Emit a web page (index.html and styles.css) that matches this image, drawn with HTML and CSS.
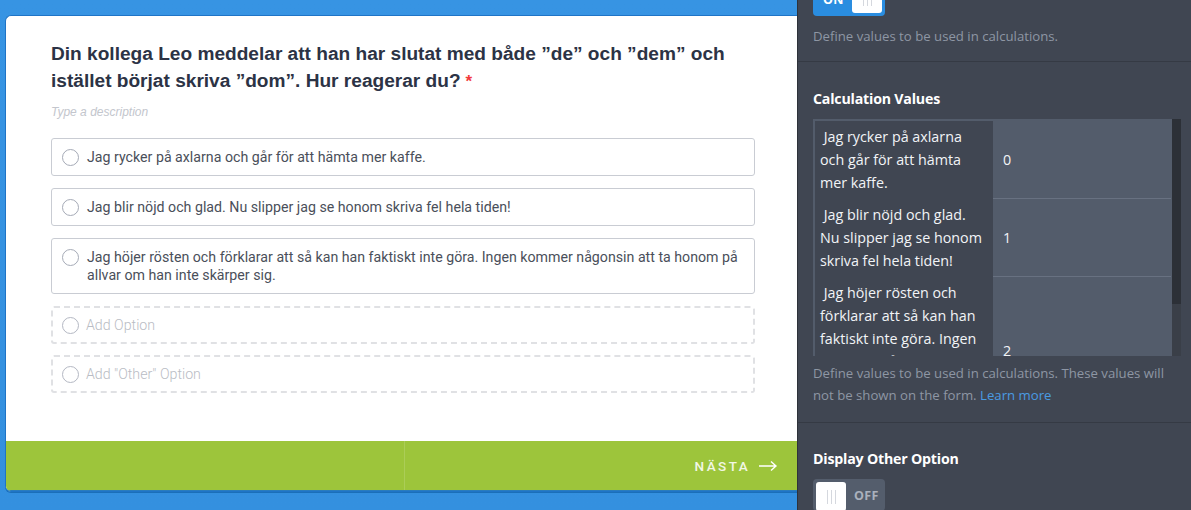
FILE: index.html
```html
<!DOCTYPE html>
<html lang="sv">
<head>
<meta charset="utf-8">
<title>Form builder</title>
<link rel="stylesheet" href="styles.css">
</head>
<body>
<div class="page">
  <main class="stage">
    <section class="card">
      <div class="card-body">
        <h1 class="question">Din kollega Leo meddelar att han har slutat med både ”de” och ”dem” och istället börjat skriva ”dom”. Hur reagerar du?<span class="req">*</span></h1>
        <p class="desc">Type a description</p>
        <ul class="options">
          <li class="option"><span class="radio"></span><span class="opt-text">Jag rycker på axlarna och går för att hämta mer kaffe.</span></li>
          <li class="option"><span class="radio"></span><span class="opt-text">Jag blir nöjd och glad. Nu slipper jag se honom skriva fel hela tiden!</span></li>
          <li class="option"><span class="radio"></span><span class="opt-text">Jag höjer rösten och förklarar att så kan han faktiskt inte göra. Ingen kommer någonsin att ta honom på allvar om han inte skärper sig.</span></li>
          <li class="option add"><span class="radio"></span><span class="opt-text">Add Option</span></li>
          <li class="option add"><span class="radio"></span><span class="opt-text">Add "Other" Option</span></li>
        </ul>
      </div>
      <div class="card-foot">
        <div class="foot-half"></div>
        <div class="foot-half next">
          <span class="next-label">NÄSTA</span>
          <svg class="arrow" width="20" height="12" viewBox="0 0 20 12"><path d="M1 6H18M13 1.5L18 6L13 10.5" fill="none" stroke="#ffffff" stroke-width="1.4"/></svg>
        </div>
      </div>
    </section>
  </main>
  <aside class="panel">
    <div class="section first">
      <div class="toggle on"><span class="tlabel">ON</span><span class="knob"><i></i><i></i><i></i></span></div>
      <p class="help">Define values to be used in calculations.</p>
    </div>
    <div class="section">
      <h2 class="heading">Calculation Values</h2>
      <div class="calc">
        <div class="calc-scroll">
          <div class="calc-grid">
            <div class="lbl">&nbsp;Jag rycker på axlarna<br>och går för att hämta<br>mer kaffe.</div><div class="val">0</div>
            <div class="lbl">&nbsp;Jag blir nöjd och glad.<br>Nu slipper jag se honom<br>skriva fel hela tiden!</div><div class="val">1</div>
            <div class="lbl">&nbsp;Jag höjer rösten och<br>förklarar att så kan han<br>faktiskt inte göra. Ingen<br>kommer någonsin att ta<br>honom på allvar om han<br>inte skärper sig.</div><div class="val">2</div>
          </div>
        </div>
        <div class="scrollbar"><div class="thumb"></div></div>
      </div>
      <p class="help two">Define values to be used in calculations. These values will not be shown on the form. <a class="link">Learn more</a></p>
    </div>
    <div class="section last">
      <h2 class="heading">Display Other Option</h2>
      <div class="toggle off"><span class="knob"><i></i><i></i><i></i></span><span class="tlabel">OFF</span></div>
    </div>
  </aside>
</div>
</body>
</html>
```

FILE: styles.css
```css
* { box-sizing: border-box; }
html, body { margin: 0; padding: 0; }
body { width: 1191px; height: 510px; overflow: hidden; background: #3591e0; }

.page { display: flex; width: 1191px; height: 510px; overflow: hidden; }

.stage {
  flex: 0 0 797px;
  width: 797px;
  height: 510px;
  overflow: hidden;
  background: linear-gradient(#3794e3, #3490df);
  padding: 15px 0 0 5px;
}

.card {
  width: 797px;
  background: #ffffff;
  border: 1px solid #1f74c6;
  border-right: none;
  border-radius: 6px 0 0 6px;
  overflow: hidden;
  box-shadow: 0 1px 0 #1b6fb8;
}

.card-body { padding: 24px 46px 48px 45px; }

.question {
  margin: 0;
  font-family: "Liberation Sans", Arial, sans-serif;
  font-weight: 700;
  font-size: 19.1px;
  line-height: 27px;
  color: #2c3345;
  width: 700px;
}
.req { color: #f23a3c; margin-left: 5px; font-size: 17px; }

.desc {
  margin: 9px 0 0 0;
  font-family: "Liberation Sans", Arial, sans-serif;
  font-style: italic;
  font-size: 12px;
  line-height: 16px;
  color: #c3c6cd;
}

.options { list-style: none; margin: 18px 0 0 0; padding: 0; width: 704px; display: flex; flex-direction: column; gap: 12px; }

.option {
  display: flex;
  align-items: flex-start;
  gap: 8px;
  border: 1px solid #c9ccd3;
  border-radius: 3px;
  padding: 9px 10px 9px 10px;
  font-family: Roboto, "Liberation Sans", sans-serif;
  font-size: 14.2px;
  line-height: 18px;
  color: #4a4f5a;
}
.option.add {
  border: 2px dashed #e0e1e4;
  padding: 8px 9px;
  gap: 7px;
  color: #b9bcc4;
  font-weight: 300;
}
.option.add + .option.add { margin-top: -1px; }

.radio {
  flex: 0 0 17px;
  width: 17px;
  height: 17px;
  border: 1px solid #a5aab6;
  border-radius: 50%;
  margin-top: 1px;
}
.option.add .radio { border-color: #b4b8c3; }
.opt-text { flex: 1; }

.card-foot { display: grid; grid-template-columns: 1fr 1fr; height: 50px; background: #9dc53b; border-bottom: 1px solid #2a7cbd; }
.foot-half { display: flex; align-items: center; }
.foot-half + .foot-half { border-left: 1px solid #abcd57; }
.next { justify-content: flex-end; padding-right: 24px; gap: 8px; }
.next-label {
  font-family: Roboto, "Liberation Sans", sans-serif;
  font-weight: 500;
  font-size: 13.5px;
  letter-spacing: 2.4px;
  color: #f2f7e6;
}
.arrow { display: block; }

/* Right panel */
.panel {
  flex: 0 0 394px;
  width: 394px;
  height: 510px;
  background: #404652;
  border-left: 1px solid #2e323a;
  overflow: hidden;
  font-family: "Open Sans", "Noto Sans", sans-serif;
}

.section { padding: 27px 10px 16px 15px; border-bottom: 1px solid #353a44; }
.section.first { padding-top: 0; margin-top: -18px; padding-bottom: 14px; }
.section.last { border-bottom: none; padding-top: 26px; }

.heading {
  margin: 0;
  font-family: "Open Sans", "Noto Sans", sans-serif;
  font-weight: 700;
  font-size: 14.2px;
  line-height: 20px;
  color: #ffffff;
  letter-spacing: -0.2px;
}

.help {
  margin: 9px 0 0 0;
  font-size: 13.2px;
  line-height: 22px;
  color: #8e96a4;
  width: 362px;
}
.help.two { margin-top: 6px; }
.link { color: #4a9be2; }

.toggle {
  width: 72px;
  height: 34px;
  border-radius: 4px;
  display: flex;
  align-items: center;
  padding: 3px;
  gap: 8px;
}
.toggle.on { background: #2a8de0; justify-content: space-between; padding-left: 10px; }
.toggle.off { background: #545d6c; margin-top: 10px; height: 32px; }
.tlabel { font-weight: 700; font-size: 12.5px; color: #ffffff; letter-spacing: 0.3px; }
.toggle.off .tlabel { color: #aab1bd; }
.knob {
  width: 30px;
  height: 28px;
  background: #ffffff;
  border-radius: 3px;
  display: flex;
  justify-content: center;
  align-items: center;
  gap: 3px;
}
.knob i { display: block; width: 1px; height: 14px; background: #d5d8de; }
.toggle.off .knob { height: 29px; margin-bottom: -3px; align-self: flex-start; }

.calc { display: flex; width: 368px; height: 237px; margin-top: 10px; overflow: hidden; background: #535c6b; }
.calc-scroll { flex: 0 0 359px; height: 237px; overflow: hidden; padding: 2px 0 0 2px; }
.calc-grid { display: grid; grid-template-columns: 178px 178px; }
.calc-grid .lbl, .calc-grid .val { font-size: 14.3px; line-height: 23px; color: #f2f4f7; }
.calc-grid .lbl { background: #404652; padding: 4px 2px 5px 5px; white-space: nowrap; overflow: hidden; }
.calc-grid .val { display: flex; align-items: center; padding: 0 10px; border-bottom: 1px solid #687181; }
.scrollbar { flex: 0 0 9px; background: #3a3f48; }
.thumb { height: 185px; background: #2c3037; }
```
